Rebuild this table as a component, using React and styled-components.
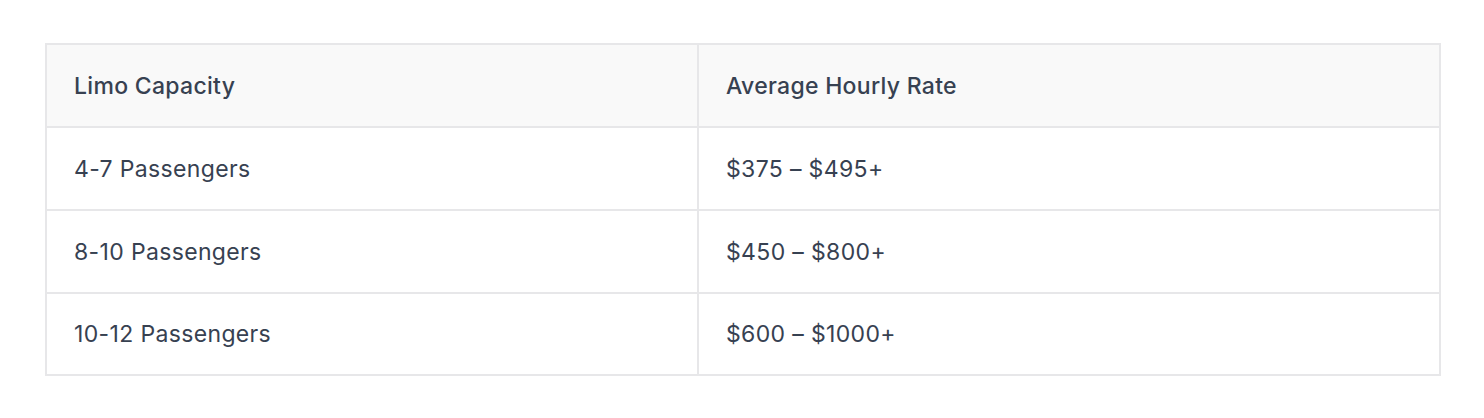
import React from "react";
import styled, { createGlobalStyle } from "styled-components";

const rates = [
  { capacity: "4-7 Passengers", rate: "$375 – $495+" },
  { capacity: "8-10 Passengers", rate: "$450 – $800+" },
  { capacity: "10-12 Passengers", rate: "$600 – $1000+" },
];

const App = () => {
  return (
    <Page>
      <GlobalStyle />
      <Table>
        <colgroup>
          <col style={{ width: "652px" }} />
          <col />
        </colgroup>
        <thead>
          <tr>
            <HeadCell>Limo Capacity</HeadCell>
            <HeadCell>Average Hourly Rate</HeadCell>
          </tr>
        </thead>
        <tbody>
          {rates.map(({ capacity, rate }, i) => (
            <Row key={capacity} $last={i === rates.length - 1}>
              <Cell>{capacity}</Cell>
              <Cell>{rate}</Cell>
            </Row>
          ))}
        </tbody>
      </Table>
    </Page>
  );
};

const GlobalStyle = createGlobalStyle`
  body {
    margin: 0;
    background-color: white;
    font-family: Inter, "Noto Sans", sans-serif;
  }
`;

const Page = styled.div`
  padding: 43px 43px 42px 45px;
`;

const Table = styled.table`
  width: 1396px;
  border-collapse: collapse;
  table-layout: fixed;
  border: 2px solid #e7e7e9;
`;

const HeadCell = styled.th`
  background-color: #f9f9f9;
  border: 2px solid #e7e7e9;
  color: #374151;

  font-size: 23px;
  font-weight: 500;
  letter-spacing: 0.3px;
  text-align: left;

  height: 81px;
  padding: 0 27px;
`;

const Row = styled.tr`
  height: ${(props) => (props.$last ? "82px" : "83px")};
`;

const Cell = styled.td`
  border: 2px solid #e7e7e9;
  color: #374151;

  font-size: 23px;
  font-weight: 400;
  letter-spacing: 0.35px;

  padding: 0 27px;
`;

export default App;
